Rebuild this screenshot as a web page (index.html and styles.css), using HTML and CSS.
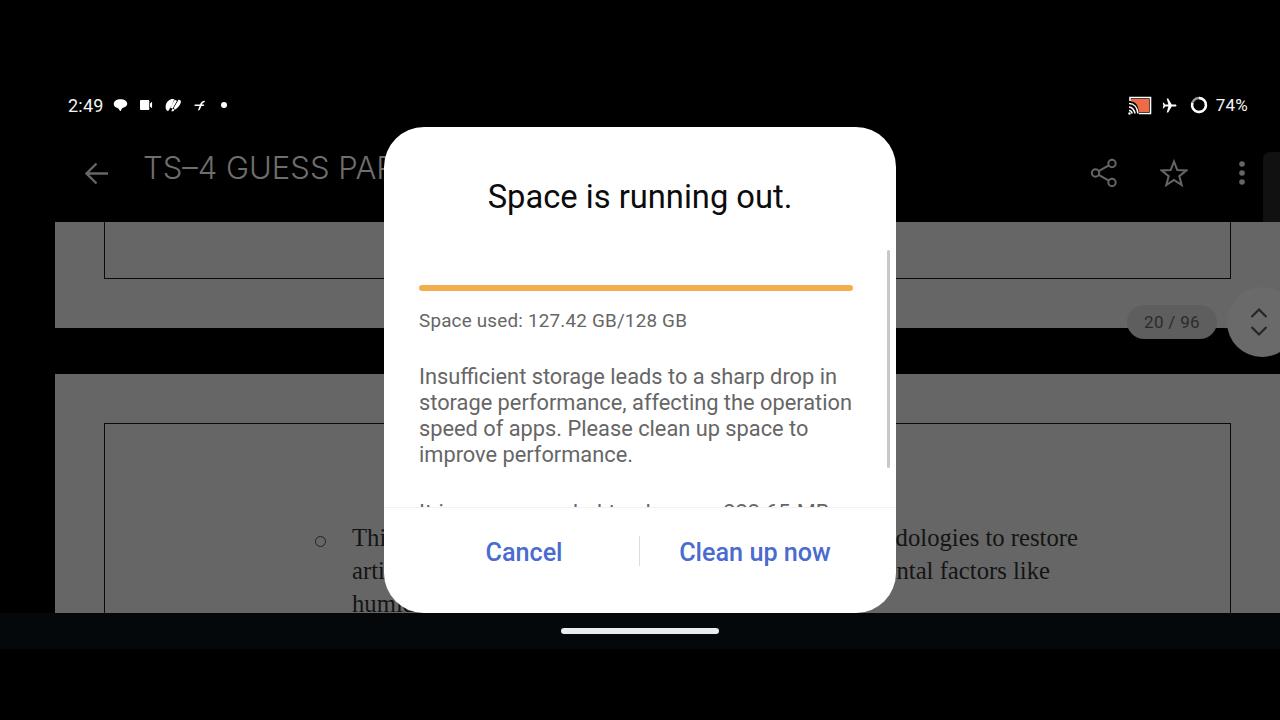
FILE: index.html
```html
<!DOCTYPE html>
<html lang="en">
<head>
<meta charset="utf-8">
<title>Space is running out</title>
<link rel="stylesheet" href="styles.css">
</head>
<body>
<div class="screen">
  <header class="status">
    <div class="status-left">
      <span class="time">2:49</span>
      <svg class="ic" width="15" height="14" viewBox="0 0 16 14"><path d="M8 .8C3.900.8.800 2.900.800 5.800c0 2 1.400 3.400 3.400 4.100.900.300 1.400.700 1.900 1.400l1.200 1.900c.400.500.800.400 1.100-.100l.900-2c.300-.700.800-1 1.600-1.300 2.500-.700 4.300-2.100 4.300-4.100C15.200 2.900 12.100.800 8 .800z" fill="#fff"/></svg>
      <svg class="ic" width="13" height="10" viewBox="0 0 14 10" preserveAspectRatio="none"><path d="M0 1a1 1 0 0 1 1-1h8a1 1 0 0 1 1 1v8a1 1 0 0 1-1 1H1a1 1 0 0 1-1-1zM10.800 3.500 13 1.800v6.400L10.800 6.500z" fill="#fff"/></svg>
      <svg class="ic" width="17" height="14" viewBox="0 0 17 14"><path d="M6 1.300C2.700 2.300.600 5.800.600 9c0 2 1 3.700 2.500 4.200L8 5.200 5.500 9.800l2 1L12 2.800l-2.300-1L6.800 6.700 9.300 1.200C8.300.800 7 1 6 1.300zM13.500 1.800 8.800 9.800l1 1.900c3-1.500 5.900-4.900 6.100-8.100.1-1-.900-2-2.400-1.800zM6.200 13.300h2.300l1-1.700-1.900-.900z" fill="#fff"/></svg>
      <svg class="ic" width="12" height="11" viewBox="0 0 12 11"><path d="M3.800 10.800 5.500 6H1c-.8 0-.8-1.400.100-1.400h4.900C6.800 2.300 8.400.800 11 .700L10.500 2.300c-1.300.100-2 .900-2.500 2.300h2.300l-.6 1.400H7.500L5.800 9.800z" fill="#fff"/></svg>
      <span class="dot"></span>
    </div>
    <div class="status-right">
      <svg class="ic" width="24" height="19" viewBox="0 0 24 19"><path d="M2 5V1.500h20.500v16H11" fill="none" stroke="#fff" stroke-width="1.600"/><path d="M3 3h18v13H11C10 9 8 6 3 5.500z" fill="#ef6a45"/><path d="M1 7.500c5 0 8.500 4 9 10M1 11c3 0 5.500 3 6 6.500M1 14.500c1.500 0 3 1.500 3 3" fill="none" stroke="#fff" stroke-width="1.600"/><circle cx="1.500" cy="17.500" r="1.200" fill="#fff"/></svg>
      <svg class="ic plane" width="15" height="15" viewBox="0 0 15 15"><path d="M14.500 7.500c0-.700-.700-1.100-1.300-1.100H9.700L6.200.500H4.700l1.700 5.900H3L1.900 4.700H.700l.700 2.800-.700 2.800h1.200L3 8.600h3.400L4.700 14.500h1.500l3.500-5.900h3.500c.600 0 1.300-.400 1.300-1.100z" fill="#fff"/></svg>
      <svg class="ic ring" width="18" height="18" viewBox="0 0 18 18"><circle cx="9" cy="9" r="7" fill="none" stroke="#999" stroke-width="2.400"/><path d="M9 2a7 7 0 1 1-6.700 5" fill="none" stroke="#fff" stroke-width="2.400"/></svg>
      <span class="battery">74%</span>
    </div>
  </header>

  <div class="appbar">
    <svg class="back" width="26" height="24" viewBox="0 0 26 24"><path d="M24 12.500H3M12.500 2.500 2.500 12.500l10 10" fill="none" stroke="#666" stroke-width="2.400"/></svg>
    <span class="doc-title">TS–4 GUESS PAPER</span>
    <div class="actions">
      <svg class="act-share" width="28" height="30" viewBox="0 0 28 30"><g fill="none" stroke="#666" stroke-width="2"><circle cx="22" cy="5.500" r="3.700"/><circle cx="22" cy="24.500" r="3.700"/><circle cx="5.500" cy="15" r="3.700"/><path d="M8.700 13.200 18.800 7.400M8.700 16.800l10.100 5.800"/></g></svg>
      <svg class="act-star" width="28" height="28" viewBox="0 0 28 28"><path d="M14 2.500 17.300 11l9.200.400-7.200 5.700 2.400 8.900-7.700-5.100L6.300 26l2.400-8.900-7.200-5.700 9.200-.400z" fill="none" stroke="#666" stroke-width="2"/></svg>
      <svg width="8" height="24" viewBox="0 0 8 24"><circle cx="4" cy="3" r="2.800" fill="#666"/><circle cx="4" cy="12" r="2.800" fill="#666"/><circle cx="4" cy="21" r="2.800" fill="#666"/></svg>
    </div>
    <div class="edge-tab"></div>
  </div>

  <main class="doc">
    <section class="page page-one"><div class="frame frame-end"></div></section>
    <section class="page page-two">
      <div class="frame frame-start">
        <div class="bullet-row">
          <span class="bullet"></span>
          <div class="para">
            <p class="line line-a"><span>This study uses AI</span><span>methodologies to restore</span></p>
            <p class="line line-b"><span>artifacts worn by age and</span><span>environmental factors like</span></p>
            <p class="line">humidity</p>
          </div>
        </div>
      </div>
    </section>
  </main>

  <footer class="nav"><span class="home"></span></footer>

  <div class="pager">20 / 96</div>
  <div class="jump">
    <svg width="20" height="30" viewBox="0 0 20 30"><path d="M2.500 10 10 2.500l7.500 7.500M2.500 20l7.500 7.500 7.500-7.500" fill="none" stroke="#262626" stroke-width="2.200"/></svg>
  </div>

  <div class="dialog">
    <h1 class="dialog-title">Space is running out.</h1>
    <div class="dialog-body">
      <div class="meter"></div>
      <p class="used">Space used: 127.42 GB/128 GB</p>
      <p class="desc">Insufficient storage leads to a sharp drop in<br>storage performance, affecting the operation<br>speed of apps. Please clean up space to<br>improve performance.</p>
      <p class="desc more">It is recommended to clean up 223.65 MB</p>
      <span class="scrollbar"></span>
    </div>
    <div class="dialog-actions">
      <button class="btn">Cancel</button>
      <span class="btn-sep"></span>
      <button class="btn">Clean up now</button>
    </div>
  </div>
</div>
</body>
</html>
```
FILE: styles.css
```css
* { box-sizing: border-box; margin: 0; padding: 0; }
html, body { width: 1280px; height: 720px; overflow: hidden; background: #000; }
body { font-family: Roboto, "Liberation Sans", sans-serif; }

.screen { position: relative; width: 1280px; height: 720px; display: flex; flex-direction: column; background: #000; overflow: hidden; }

.status { height: 122px; padding: 84px 32px 0 68px; display: flex; justify-content: space-between; align-items: flex-start; color: #f4f4f4; }
.status-left, .status-right { display: flex; align-items: center; height: 42px; }
.time { font-size: 18px; letter-spacing: .2px; margin-right: 9px; }
.ic { display: block; flex: none; }
.status-left .ic { margin-right: 12px; }
.status-left .dot { width: 6px; height: 6px; margin-left: 3px; border-radius: 50%; background: #fff; }
.status-right .plane { margin: 0 13px 0 10px; }
.status-right .ring { margin-right: 8px; }
.battery { font-size: 17px; letter-spacing: .2px; }

.appbar { position: relative; height: 100px; display: flex; align-items: flex-start; padding: 28px 34px 0 84px; color: #6e6e6e; }
.back { margin-top: 11px; margin-right: 33px; flex: none; }
.doc-title { font-family: Inter, Roboto, sans-serif; font-weight: 300; font-size: 31px; line-height: 36px; white-space: nowrap; }
.actions { margin-left: auto; margin-top: 8px; display: flex; align-items: center; }
.act-share { margin-right: 42px; }
.act-star { margin-right: 50px; }
.edge-tab { position: absolute; right: 0; top: 30px; width: 17px; height: 70px; background: #111; border-top-left-radius: 7px; }

.doc { display: flex; flex-direction: column; gap: 46px; padding-left: 55px; height: 391px; overflow: hidden; }
.page { background: #666; padding: 0 49px; }
.page-one { height: 106px; flex: none; }
.page-two { height: 239px; flex: none; padding-top: 49px; overflow: hidden; }
.frame { border: 1px solid #0a0a0a; }
.frame-end { height: 57px; border-top: 0; }
.frame-start { height: 300px; border-bottom: 0; }

.bullet-row { display: flex; align-items: flex-start; padding: 97px 0 0 210px; }
.bullet { width: 11px; height: 11px; border: 1.500px solid #222; border-radius: 50%; margin: 15px 26px 0 0; flex: none; }
.para { font-family: "Liberation Serif", serif; font-size: 24.700px; line-height: 33px; color: #141414; }
.line { white-space: nowrap; display: flex; justify-content: space-between; }
.line-a { width: 726px; }
.line-b { width: 698px; }

.nav { flex: none; height: 36px; background: #05080b; display: flex; justify-content: center; align-items: flex-start; padding-top: 15px; }
.home { width: 158px; height: 6px; border-radius: 3px; background: #e9edef; }

.pager { position: absolute; left: 1127px; top: 305px; width: 90px; height: 34px; padding-bottom: 1px; border-radius: 17px; background: #5e5e5f; color: #2b2b2b; font-size: 17px; display: flex; align-items: center; justify-content: center; letter-spacing: .3px; }
.jump { position: absolute; left: 1227px; top: 287px; width: 70px; height: 70px; border-radius: 50%; background: #6a6a6a; display: flex; align-items: center; padding-left: 22px; }

.dialog { position: absolute; left: 384px; top: 127px; width: 512px; height: 486px; background: #fff; border-radius: 40px; display: flex; flex-direction: column; overflow: hidden; }
.dialog-title { flex: none; height: 123px; padding-top: 50px; text-align: center; font-size: 32.700px; line-height: 40px; font-weight: 400; color: #0c0c0c; }
.dialog-body { position: relative; flex: none; height: 258px; padding: 35px 43px 0 35px; overflow: hidden; color: #666; font-size: 21.800px; line-height: 26px; border-bottom: 1px solid #f2f2f2; }
.meter { height: 6px; border-radius: 3px; background: #f4ad4e; }
.used { font-size: 18.850px; line-height: 24px; margin-top: 18px; letter-spacing: .2px; }
.desc { margin-top: 31px; }
.more { margin-top: 32px; white-space: nowrap; word-spacing: 1px; }
.scrollbar { position: absolute; left: 503px; top: 0; width: 3px; height: 218px; background: #c8c8c8; border-radius: 2px; }

.dialog-actions { flex: 1; display: flex; align-items: flex-start; padding: 28px 36px 0 35px; }
.btn { flex: 1; margin-top: 1px; border: 0; background: none; font-family: Roboto, sans-serif; font-weight: 500; font-size: 25.200px; line-height: 32px; color: #4a6bd0; }
.btn-sep { flex: none; width: 1px; height: 30px; margin: 0 10px; background: #dcdcdc; }
```
